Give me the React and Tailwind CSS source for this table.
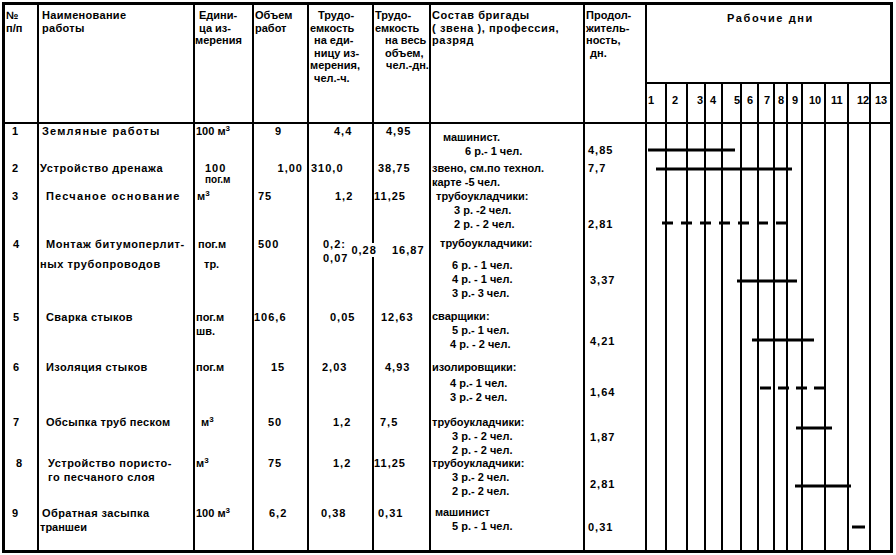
import React from "react";

const L = ({ c = "", children }) => (
  <div className={"leading-[14px] whitespace-nowrap " + c}>{children}</div>
);

const N = ({ c = "", children }) => (
  <div className={"leading-[14px] whitespace-nowrap tracking-[1px] " + c}>{children}</div>
);

const M3 = () => (
  <>
    м<sup className="text-[8px]">3</sup>
  </>
);

const Cell = ({ c = "", children }) => (
  <div className={"border-r-2 border-black relative " + c}>{children}</div>
);

const dayHead = [
  { n: "1", c: "pl-[1px]" },
  { n: "2", c: "pl-[5px]" },
  { n: "3", c: "pl-[9px]" },
  { n: "4", c: "pl-[4px]" },
  { n: "5", c: "pl-[11px]" },
  { n: "6", c: "pl-[5px]" },
  { n: "7", c: "pl-[5px]" },
  { n: "8", c: "pl-[3px]" },
  { n: "9", c: "pl-[4px]" },
  { n: "10", c: "pl-[6px]" },
  { n: "11", c: "pl-[5px]" },
  { n: "12", c: "pl-[8px]" },
  { n: "13", c: "pl-[4px]" },
];

const rows = [
  [
    <Cell c="pl-[7px]"><L>1</L></Cell>,
    <Cell c="pl-[3px]"><L c="tracking-[1.2px]">Земляные работы</L></Cell>,
    <Cell c="pl-[1px]"><L>100 <M3 /></L></Cell>,
    <Cell c="pl-[21px]"><N>9</N></Cell>,
    <Cell c="pl-[25px]"><N>4,4</N></Cell>,
    <Cell c="pl-[12px]"><N>4,95</N></Cell>,
    <Cell c="pt-[6px]">
      <L c="pl-[12px]">машинист.</L>
      <L c="pl-[34px]">6 р.- 1 чел.</L>
    </Cell>,
    <Cell c="pt-[19px] pl-[3px]"><N>4,85</N></Cell>,
  ],
  [
    <Cell c="pt-[1px] pl-[7px]"><L>2</L></Cell>,
    <Cell c="pt-[1px] pl-[1px]"><L c="tracking-[0.6px]">Устройство дренажа</L></Cell>,
    <Cell c="pt-[1px] pl-[10px]">
      <N>100</N>
      <div className="text-[10px] leading-[10px]">пог.м</div>
    </Cell>,
    <Cell c="pt-[1px] pr-[4px] text-right"><N>1,00</N></Cell>,
    <Cell c="pt-[1px] pl-[2px]"><N>310,0</N></Cell>,
    <Cell c="pt-[1px] pl-[4px]"><N>38,75</N></Cell>,
    <Cell c="pt-[1px] pl-[1px]">
      <L c="leading-[13px]">звено, см.по технол.</L>
      <L c="leading-[13px]">карте -5 чел.</L>
    </Cell>,
    <Cell c="pt-[1px] pl-[3px]"><N>7,7</N></Cell>,
  ],
  [
    <Cell c="pt-[1px] pl-[7px]"><L>3</L></Cell>,
    <Cell c="pt-[1px] pl-[7px]"><L c="tracking-[1.2px]">Песчаное основание</L></Cell>,
    <Cell c="pt-[1px] pl-[2px]"><L><M3 /></L></Cell>,
    <Cell c="pt-[1px] pl-[4px]"><N>75</N></Cell>,
    <Cell c="pt-[1px] pl-[26px]"><N>1,2</N></Cell>,
    <Cell c="pt-[1px]"><N>11,25</N></Cell>,
    <Cell c="pt-[1px]">
      <L c="pl-[5px]">трубоукладчики:</L>
      <L c="pl-[23px]">3 р. -2 чел.</L>
      <L c="pl-[23px]">2 р. - 2 чел.</L>
    </Cell>,
    <Cell c="pt-[29px] pl-[3px]"><N>2,81</N></Cell>,
  ],
  [
    <Cell c="pt-[1px] pl-[8px]"><L>4</L></Cell>,
    <Cell c="pt-[1px]">
      <L c="pl-[7px] tracking-[0.6px]">Монтаж битумоперлит-</L>
      <L c="pl-[1px] mt-[6px] tracking-[0.6px]">ных трубопроводов</L>
    </Cell>,
    <Cell c="pt-[1px]">
      <L c="pl-[3px]">пог.м</L>
      <L c="pl-[9px] mt-[6px]">тр.</L>
    </Cell>,
    <Cell c="pt-[1px] pl-[4px]"><N>500</N></Cell>,
    <Cell c="pt-[1px] pl-[14px] flex items-start tracking-[1px]">
      <div>
        <L c="leading-[13px]">0,2:</L>
        <L c="leading-[13px]">0,07</L>
      </div>
      <span className="mt-[6px] ml-[3px] leading-[14px] bg-white relative z-10 whitespace-nowrap">
        0,28
      </span>
    </Cell>,
    <Cell c="pt-[7px] pl-[18px]"><N>16,87</N></Cell>,
    <Cell>
      <L c="pl-[9px]">трубоукладчики:</L>
      <L c="pl-[21px] mt-[8px]">6 р. - 1 чел.</L>
      <L c="pl-[21px]">4 р. - 1 чел.</L>
      <L c="pl-[21px]">3 р.- 3 чел.</L>
    </Cell>,
    <Cell c="pt-[37px] pl-[5px]"><N>3,37</N></Cell>,
  ],
  [
    <Cell c="pt-[5px] pl-[8px]"><L>5</L></Cell>,
    <Cell c="pt-[5px] pl-[7px]"><L c="tracking-[0.4px]">Сварка стыков</L></Cell>,
    <Cell c="pt-[5px] pl-[1px]">
      <L c="leading-[13px]">пог.м</L>
      <L c="leading-[13px]">шв.</L>
    </Cell>,
    <Cell c="pt-[5px] pl-[0px]"><N>106,6</N></Cell>,
    <Cell c="pt-[5px] pl-[21px]"><N>0,05</N></Cell>,
    <Cell c="pt-[5px] pl-[7px]"><N>12,63</N></Cell>,
    <Cell c="pt-[4px]">
      <L c="pl-[1px]">сварщики:</L>
      <L c="pl-[21px]">5 р.- 1 чел.</L>
      <L c="pl-[19px]">4 р. - 2 чел.</L>
    </Cell>,
    <Cell c="pt-[29px] pl-[5px]"><N>4,21</N></Cell>,
  ],
  [
    <Cell c="pt-[2px] pl-[8px]"><L>6</L></Cell>,
    <Cell c="pt-[2px] pl-[7px]"><L c="tracking-[0.4px]">Изоляция стыков</L></Cell>,
    <Cell c="pt-[2px] pl-[1px]"><L>пог.м</L></Cell>,
    <Cell c="pt-[2px] pl-[17px]"><N>15</N></Cell>,
    <Cell c="pt-[2px] pl-[13px]"><N>2,03</N></Cell>,
    <Cell c="pt-[2px] pl-[11px]"><N>4,93</N></Cell>,
    <Cell c="pt-[2px]">
      <L c="pl-[1px]">изолировщики:</L>
      <L c="pl-[19px] mt-[2px]">4 р.- 1 чел.</L>
      <L c="pl-[19px]">3 р.- 2 чел.</L>
    </Cell>,
    <Cell c="pt-[27px] pl-[5px]"><N>1,64</N></Cell>,
  ],
  [
    <Cell c="pt-[5px] pl-[8px]"><L>7</L></Cell>,
    <Cell c="pt-[5px] pl-[7px]"><L c="tracking-[0.3px]">Обсыпка труб песком</L></Cell>,
    <Cell c="pt-[5px] pl-[6px]"><L><M3 /></L></Cell>,
    <Cell c="pt-[5px] pl-[14px]"><N>50</N></Cell>,
    <Cell c="pt-[5px] pl-[24px]"><N>1,2</N></Cell>,
    <Cell c="pt-[5px] pl-[6px]"><N>7,5</N></Cell>,
    <Cell c="pt-[5px]">
      <L c="pl-[1px]">трубоукладчики:</L>
      <L c="pl-[21px]">3 р. - 2 чел.</L>
      <L c="pl-[21px]">2 р. - 2 чел.</L>
    </Cell>,
    <Cell c="pt-[20px] pl-[5px]"><N>1,87</N></Cell>,
  ],
  [
    <Cell c="pt-[1px] pl-[11px]"><L>8</L></Cell>,
    <Cell c="pt-[1px] pl-[9px]">
      <L c="tracking-[0.5px]">Устройство пористо-</L>
      <L c="tracking-[0.5px]">го песчаного слоя</L>
    </Cell>,
    <Cell c="pt-[1px] pl-[1px]"><L><M3 /></L></Cell>,
    <Cell c="pt-[1px] pl-[14px]"><N>75</N></Cell>,
    <Cell c="pt-[1px] pl-[24px]"><N>1,2</N></Cell>,
    <Cell c="pt-[1px]"><N>11,25</N></Cell>,
    <Cell c="pt-[1px]">
      <L c="pl-[1px]">трубоукладчики:</L>
      <L c="pl-[21px]">3 р.- 2 чел.</L>
      <L c="pl-[21px]">2 р.- 2 чел.</L>
    </Cell>,
    <Cell c="pt-[22px] pl-[5px]"><N>2,81</N></Cell>,
  ],
  [
    <Cell c="pt-[4px] pl-[7px]"><L>9</L></Cell>,
    <Cell c="pt-[4px]">
      <L c="pl-[3px] tracking-[0.4px]">Обратная засыпка</L>
      <L c="pl-[1px]">траншеи</L>
    </Cell>,
    <Cell c="pt-[4px] pl-[1px]"><L>100 <M3 /></L></Cell>,
    <Cell c="pt-[4px] pl-[15px]"><N>6,2</N></Cell>,
    <Cell c="pt-[4px] pl-[12px]"><N>0,38</N></Cell>,
    <Cell c="pt-[4px] pl-[4px]"><N>0,31</N></Cell>,
    <Cell c="pt-[3px]">
      <L c="pl-[4px]">машинист</L>
      <L c="pl-[21px]">5 р. - 1 чел.</L>
    </Cell>,
    <Cell c="pt-[18px] pl-[3px]"><N>0,31</N></Cell>,
  ],
];

const bars = [
  { x1: 648, x2: 735, y: 150 },
  { x1: 656, x2: 792, y: 169 },
  { x1: 662, x2: 792, y: 223, dash: "11 8" },
  { x1: 737, x2: 797, y: 281 },
  { x1: 752, x2: 814, y: 340 },
  { x1: 760, x2: 826, y: 388, dash: "11 7" },
  { x1: 796, x2: 832, y: 428 },
  { x1: 795, x2: 851, y: 486 },
  { x1: 852, x2: 865, y: 527 },
];

export default function App() {
  return (
    <div className="w-[896px] h-[555px] bg-white overflow-hidden pl-[2px] pt-[2px] text-black font-bold text-[11px] font-['Liberation_Sans',Arial,sans-serif]">
      <div className="relative w-[891px] border-[3px] border-black">
        <div className="grid grid-cols-[34px_156px_59px_55px_65px_57px_154px_62px_20px_21px_18px_17px_19px_17px_16px_13px_15px_23px_23px_22px_19px] grid-rows-[79px_40px_36px_28px_48px_69px_53px_52px_45px_47px_48px]">
          {/* header */}
          <div className="row-span-2 border-r-2 border-b-2 border-black pt-[4px] pl-[1px] leading-[12.5px]">
            <div>№</div>
            <div>п/п</div>
          </div>
          <div className="row-span-2 border-r-2 border-b-2 border-black pt-[4px] pl-[3px] leading-[12.5px] tracking-[0.3px]">
            <div>Наименование</div>
            <div>работы</div>
          </div>
          <div className="row-span-2 border-r-2 border-b-2 border-black pt-[4px] leading-[12.5px] whitespace-nowrap">
            <div className="pl-[4px]">Едини-</div>
            <div className="pl-[4px]">ца из-</div>
            <div className="pl-[0px]">мерения</div>
          </div>
          <div className="row-span-2 border-r-2 border-b-2 border-black pt-[4px] pl-[1px] leading-[12.5px]">
            <div>Объем</div>
            <div>работ</div>
          </div>
          <div className="row-span-2 border-r-2 border-b-2 border-black pt-[4px] leading-[12.5px] whitespace-nowrap">
            <div className="pl-[9px]">Трудо-</div>
            <div className="pl-[1px]">емкость</div>
            <div className="pl-[5px]">на еди-</div>
            <div className="pl-[5px]">ницу из-</div>
            <div className="pl-[1px]">мерения,</div>
            <div className="pl-[5px]">чел.-ч.</div>
          </div>
          <div className="row-span-2 border-r-2 border-b-2 border-black pt-[4px] leading-[12.5px] whitespace-nowrap">
            <div className="pl-[1px]">Трудо-</div>
            <div className="pl-[1px]">емкость</div>
            <div className="pl-[11px]">на весь</div>
            <div className="pl-[11px]">объем,</div>
            <div className="pl-[12px]">чел.-дн.</div>
          </div>
          <div className="row-span-2 border-r-2 border-b-2 border-black pt-[4px] pl-[1px] leading-[12.5px] whitespace-nowrap tracking-[0.6px]">
            <div>Состав бригады</div>
            <div>( звена ), профессия,</div>
            <div>разряд</div>
          </div>
          <div className="row-span-2 border-r-2 border-b-2 border-black pt-[4px] leading-[12.5px] whitespace-nowrap">
            <div className="pl-[1px]">Продол-</div>
            <div className="pl-[1px]">житель-</div>
            <div className="pl-[1px]">ность,</div>
            <div className="pl-[5px]">дн.</div>
          </div>
          <div className="col-span-13 border-b-2 border-black pt-[6px] pl-[4px] text-center leading-[14px] tracking-[1.6px]">
            Рабочие дни
          </div>
          {dayHead.map((d, i) => (
            <div
              key={"h" + i}
              className={
                (i < 12 ? "border-r-2 " : "") +
                "border-b-2 border-black pt-[9px] leading-[14px] " +
                d.c
              }
            >
              {d.n}
            </div>
          ))}

          {/* body */}
          {rows.map((r, ri) => (
            <React.Fragment key={"r" + ri}>
              {r.map((cell, ci) => (
                <React.Fragment key={ci}>{cell}</React.Fragment>
              ))}
              {dayHead.map((d, i) => (
                <div
                  key={"d" + i}
                  className={i < 12 ? "border-r-2 border-black" : ""}
                />
              ))}
            </React.Fragment>
          ))}
        </div>

        <svg
          className="absolute left-0 top-0 pointer-events-none"
          width="885"
          height="545"
          viewBox="5 5 885 545"
        >
          {bars.map((b, i) => (
            <line
              key={i}
              x1={b.x1}
              x2={b.x2}
              y1={b.y}
              y2={b.y}
              stroke="#000"
              strokeWidth="3"
              strokeDasharray={b.dash}
            />
          ))}
        </svg>
      </div>
    </div>
  );
}
